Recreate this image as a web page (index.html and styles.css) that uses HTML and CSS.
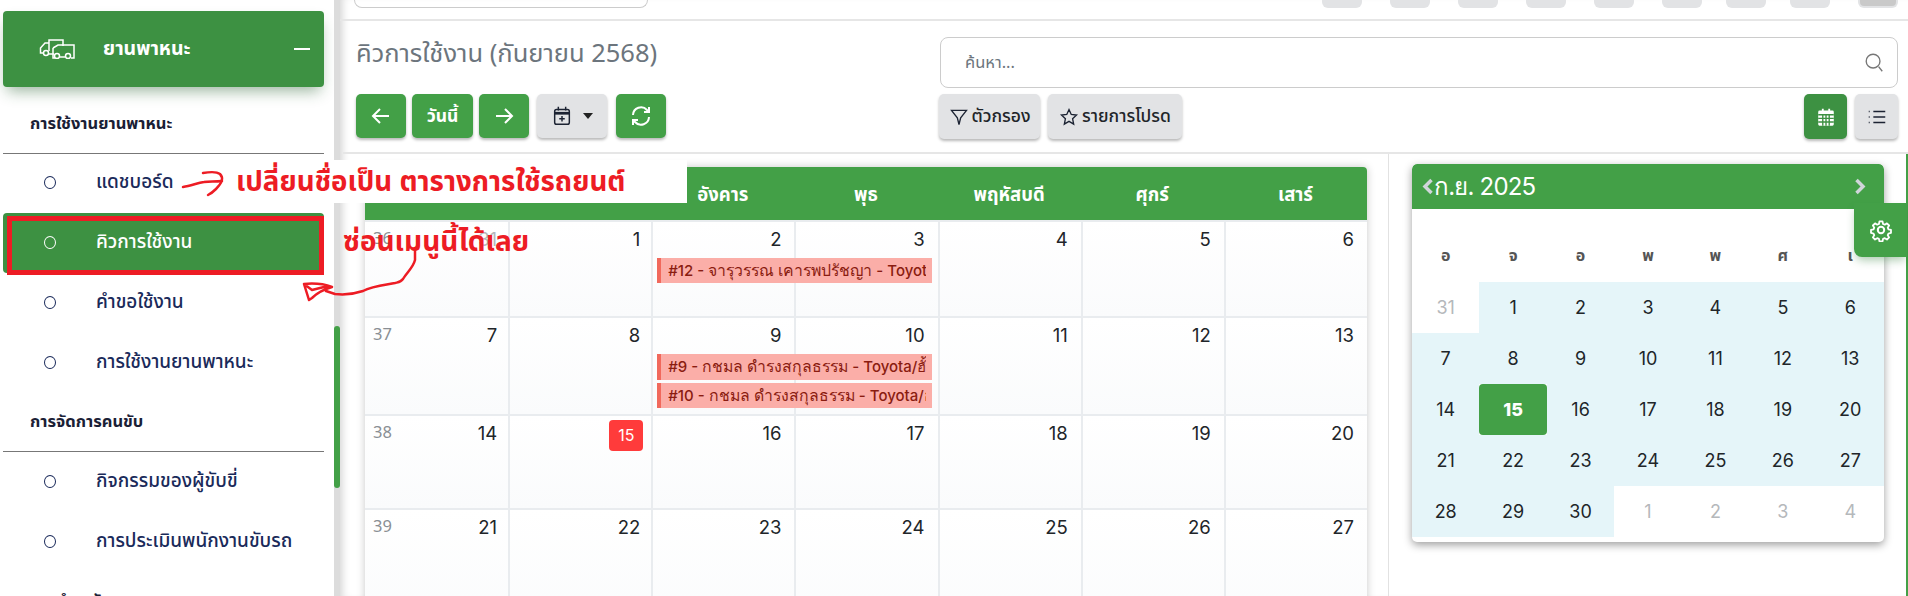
FILE: index.html
```html
<!DOCTYPE html>
<html lang="th">
<head>
<meta charset="utf-8">
<title>คิวการใช้งาน</title>
<link rel="stylesheet" href="styles.css">
</head>
<body>
<div class="app">
  <aside class="side">
    <div class="menu-head">
      <svg class="truck" viewBox="0 0 36 20" fill="none" stroke="#fff" stroke-width="1.5"><path d="M10 12V1h14v6"/><path d="M10 4H6L1.500 9v5h3"/><circle cx="7" cy="14" r="2.500"/><path d="M10 15h5"/><path d="M14 9l5-3h16v13h-3"/><path d="M14 9v10h2"/><circle cx="18" cy="17" r="2.500"/><circle cx="29" cy="17" r="2.500"/><path d="M21 18h5"/></svg>
      <span class="menu-title">ยานพาหนะ</span>
      <span class="minus"></span>
    </div>
    <div class="sec">การใช้งานยานพาหนะ</div>
    <a class="row first"><i class="dot"></i>แดชบอร์ด</a>
    <a class="row active"><i class="dot"></i>คิวการใช้งาน</a>
    <a class="row"><i class="dot"></i>คำขอใช้งาน</a>
    <a class="row"><i class="dot"></i>การใช้งานยานพาหนะ</a>
    <div class="sec sec2">การจัดการคนขับ</div>
    <a class="row"><i class="dot"></i>กิจกรรมของผู้ขับขี่</a>
    <a class="row"><i class="dot"></i>การประเมินพนักงานขับรถ</a>
    <div class="sec sec2">การบำรุงรักษา</div>
  </aside>
  <div class="track"><div class="thumb"></div></div>
  <main class="main">
    <div class="topbar">
      <div class="topsearch"></div>
      <div class="topbtns"><b></b><b></b><b></b><b></b><b></b><b></b><b></b><b></b><b class="avatar"></b></div>
    </div>
    <div class="toolbar">
      <div class="tool-left">
        <h1 class="title">คิวการใช้งาน (กันยายน 2568)</h1>
        <div class="btns">
          <button class="btn g w50"><svg viewBox="0 0 24 24" class="ic"><path d="M20 12H4M11 5l-7 7 7 7"/></svg></button>
          <button class="btn g today">วันนี้</button>
          <button class="btn g w50"><svg viewBox="0 0 24 24" class="ic"><path d="M4 12h16M13 5l7 7-7 7"/></svg></button>
          <button class="btn s addb"><svg viewBox="0 0 24 24" class="ic dark"><rect x="4" y="5" width="16" height="16" rx="2"/><path d="M4 9h16" stroke-width="3"/><path d="M8 2v4M16 2v4M12 12v6M9 15h6"/></svg><span class="caret"></span></button>
          <button class="btn g w50"><svg viewBox="0 0 24 24" class="ic"><path d="M4 11a8 8 0 0 1 14-5l2 2M20 3v5h-5M20 13a8 8 0 0 1-14 5l-2-2M4 21v-5h5"/></svg></button>
        </div>
      </div>
      <div class="tool-right">
        <div class="search"><span>ค้นหา...</span><svg viewBox="0 0 24 24" class="ic gray"><circle cx="11" cy="10" r="7.500"/><path d="M17 16l4 5"/></svg></div>
        <div class="filters">
          <button class="btn s fb fb1"><svg viewBox="0 0 24 24" class="ic dark"><path d="M3 4h18l-7 9v0l-2 8-2-8z"/></svg>ตัวกรอง</button>
          <button class="btn s fb fb2"><svg viewBox="0 0 24 24" class="ic dark"><path d="M12 3l2.700 6 6.300.7-4.700 4.300 1.300 6.500-5.600-3.300-5.600 3.300 1.300-6.500L3 9.700 9.300 9z"/></svg>รายการโปรด</button>
          <span class="grow"></span>
          <button class="btn view dg"><svg viewBox="0 0 24 24" class="cal-ic"><path fill="#fff" d="M5 5h2.500V3h2v2h5V3h2v2H19a1.500 1.500 0 0 1 1.500 1.500V20a1.500 1.500 0 0 1-1.500 1.500H5A1.500 1.500 0 0 1 3.500 20V6.500A1.500 1.500 0 0 1 5 5z"/><path stroke="#3d9142" stroke-width="1.500" d="M3.500 9.500h17M3.500 13.500h17M3.500 17.500h17M8.500 9.500v12M12 9.500v12M15.500 9.500v12"/></svg></button>
          <button class="btn view s"><svg viewBox="0 0 24 24" class="ic dark"><path d="M8 6h13M8 12h13M8 18h13M3 6h1M3 12h1M3 18h1"/></svg></button>
        </div>
      </div>
    </div>
    <div class="content">
      <section class="cal-wrap">
        <div class="cal">
          <div class="cal-head"><span>อาทิตย์</span><span>จันทร์</span><span>อังคาร</span><span>พุธ</span><span>พฤหัสบดี</span><span>ศุกร์</span><span>เสาร์</span></div>
          <div class="week wk1">
            <div class="day"><em>36</em><u class="other">31</u></div><div class="day"><u>1</u></div>
            <div class="day"><u>2</u><div class="evs"><div class="ev"><span>#12 - <small>จารุวรรณ เคารพปรัชญา</small> - Toyota/ฮั้ว 1234</span></div></div></div>
            <div class="day"><u>3</u></div><div class="day"><u>4</u></div><div class="day"><u>5</u></div><div class="day"><u>6</u></div>
          </div>
          <div class="week wk2">
            <div class="day"><em>37</em><u>7</u></div><div class="day"><u>8</u></div>
            <div class="day"><u>9</u><div class="evs"><div class="ev tall"><span>#9 - <small>กชมล ดำรงสกุลธรรม</small> - Toyota/ฮั้ว 1234</span></div><div class="ev"><span>#10 - <small>กชมล ดำรงสกุลธรรม</small> - Toyota/ฮั้ว 1234</span></div></div></div>
            <div class="day"><u>10</u></div><div class="day"><u>11</u></div><div class="day"><u>12</u></div><div class="day"><u>13</u></div>
          </div>
          <div class="week wk3">
            <div class="day"><em>38</em><u>14</u></div><div class="day"><u class="now">15</u></div><div class="day"><u>16</u></div><div class="day"><u>17</u></div><div class="day"><u>18</u></div><div class="day"><u>19</u></div><div class="day"><u>20</u></div>
          </div>
          <div class="week wk4">
            <div class="day"><em>39</em><u>21</u></div><div class="day"><u>22</u></div><div class="day"><u>23</u></div><div class="day"><u>24</u></div><div class="day"><u>25</u></div><div class="day"><u>26</u></div><div class="day"><u>27</u></div>
          </div>
        </div>
      </section>
      <section class="right">
        <div class="mini">
          <div class="mini-head">
            <svg class="chev" viewBox="0 0 12 17"><path d="M9.500 2L3 8.500 9.500 15"/></svg><span class="mini-title">ก.ย. 2025</span><svg class="chev" viewBox="0 0 12 17"><path d="M2.500 2L9 8.500 2.500 15"/></svg>
          </div>
          <div class="mini-dow"><span>อ</span><span>จ</span><span>อ</span><span>พ</span><span>พ</span><span>ศ</span><span>เ</span></div>
          <div class="mini-grid">
            <span class="off">31</span><span class="in">1</span><span class="in">2</span><span class="in">3</span><span class="in">4</span><span class="in">5</span><span class="in">6</span>
            <span class="in">7</span><span class="in">8</span><span class="in">9</span><span class="in">10</span><span class="in">11</span><span class="in">12</span><span class="in">13</span>
            <span class="in">14</span><span class="sel">15</span><span class="in">16</span><span class="in">17</span><span class="in">18</span><span class="in">19</span><span class="in">20</span>
            <span class="in">21</span><span class="in">22</span><span class="in">23</span><span class="in">24</span><span class="in">25</span><span class="in">26</span><span class="in">27</span>
            <span class="in">28</span><span class="in">29</span><span class="in">30</span><span class="off">1</span><span class="off">2</span><span class="off">3</span><span class="off">4</span>
          </div>
        </div>
      </section>
      <div class="edge"></div>
    </div>
  </main>
</div>
<button class="gear"><svg viewBox="0 0 24 24"><path d="M10.300 2.500h3.400l.6 2.800 1.900.8 2.400-1.500 2.400 2.400-1.500 2.400.8 1.900 2.800.6v3.400l-2.800.6-.8 1.900 1.500 2.400-2.400 2.400-2.400-1.500-1.900.8-.6 2.800h-3.400l-.6-2.800-1.900-.8-2.400 1.500-2.400-2.400 1.500-2.400-.8-1.900-2.800-.6v-3.400l2.800-.6.8-1.900-1.500-2.400 2.400-2.400 2.400 1.500 1.900-.8z" transform="translate(1.200 1.200) scale(.9)"/><circle cx="12" cy="12" r="3.200"/></svg></button>
<div class="note-box"></div>
<div class="note note1">เปลี่ยนชื่อเป็น ตารางการใช้รถยนต์</div>
<div class="note note2">ซ่อนเมนูนี้ได้เลย</div>
<div class="red-rect"></div>
<svg class="scribble" viewBox="0 0 1908 596" fill="none" stroke="#ed1c24" stroke-width="2.500" stroke-linecap="round" stroke-linejoin="round">
  <path d="M183 187c8-1 14-4 21-5 5-1 11 0 18-1"/>
  <path d="M203 173c6-1 13-2 17 1 4 4 1 10-4 15-3 3-6 5-8 6"/>
  <path d="M415 249v11c-2 8-8 12-12 19-2 3-4 3-8 4-11 2-23 3-32 8-9 3-20 4-28 3l-9-3"/>
  <path d="M304 284c10-1 20 0 28 3-7 2-14 5-20 11l-3 2-5-16 8 6 16-4"/>
</svg>
</body>
</html>
```
FILE: styles.css
```css
* { box-sizing: border-box; }
html, body { margin: 0; height: 596px; overflow: hidden; background: #fff; }
body { font-family: "Noto Sans", "Noto Sans Thai", Inter, sans-serif; color: #212529; position: relative; }
.app { display: flex; width: 1908px; height: 596px; }
.side { width: 334px; flex: none; padding: 11px 10px 0 3px; overflow: hidden; background: #fff; }
.menu-head { height: 76px; background: #3d9142; border-radius: 4px; display: flex; align-items: center; color: #fff; padding: 0 14px 0 36px; box-shadow: 0 8px 14px -4px rgba(30,90,40,.45); }
.truck { width: 36px; height: 20px; margin-right: 28px; }
.menu-title { font-weight: 700; font-size: 19.500px; flex: 1; }
.minus { width: 16px; height: 2px; background: #fff; }
.sec { height: 67px; padding: 21px 0 0 27px; font-size: 16.500px; font-weight: 700; color: #1a2035; border-bottom: 1px solid #777; line-height: 30px; white-space: nowrap; }
.sec2 { height: 59px; padding-top: 13px; }
.row { display: flex; align-items: center; height: 60px; padding: 0 0 2px 41px; font-size: 19px; color: #1a2a5a; font-weight: 500; white-space: nowrap; }
.row.first { height: 59px; }
.active { background: #3d9142; color: #fff; border-radius: 4px; }
.dot { width: 12px; height: 13px; border-radius: 50%; border: 1.500px solid currentColor; margin-right: 40px; flex: none; }
.track { width: 6px; flex: none; background: #dcdcdc; position: relative; }
.thumb { position: absolute; top: 326px; left: 0; width: 6px; height: 162px; background: #43a047; border-radius: 3px; }
.main { flex: 1; min-width: 0; display: flex; flex-direction: column; box-shadow: inset 8px 0 8px -6px rgba(0,0,0,.18); }
.topbar { height: 21px; flex: none; border-bottom: 2px solid #e6e6e6; display: flex; justify-content: space-between; align-items: flex-start; padding: 0 10px 0 14px; }
.topsearch { width: 294px; height: 8px; border: 1px solid #ccc; border-top: 0; border-radius: 0 0 8px 8px; }
.topbtns { display: flex; gap: 28px; }
.topbtns b { display: block; width: 40px; height: 8px; background: #e2e3e5; border-radius: 0 0 6px 6px; }
.topbtns b:nth-child(7), .topbtns b:nth-child(8) { margin-left: -4px; }
.topbtns .avatar { background: #c9c9c9; border: 2px solid #e2e3e5; border-top: 0; }
.toolbar { height: 133px; flex: none; display: flex; justify-content: space-between; border-bottom: 2px solid #e6e6e6; padding-left: 13px; margin-left: 3px; }
.title { margin: 0; font-size: 25.500px; font-weight: 400; color: #6c757d; height: 73px; line-height: 62px; white-space: nowrap; }
.btns { display: flex; gap: 6px; }
.btn { border: 0; height: 44px; border-radius: 5px; display: inline-flex; align-items: center; justify-content: center; font: 500 17.500px "Noto Sans", "Noto Sans Thai", sans-serif; padding: 0; box-shadow: 0 2px 3px rgba(0,0,0,.28); white-space: nowrap; }
.g { background: #43a047; color: #fff; }
.s { background: #e2e3e5; color: #212529; }
.dg { background: #3d9142; }
.w50 { width: 50px; }
.today { width: 61px; font-weight: 700; }
.addb { width: 70px; margin: 0 3px 0 2px; gap: 10px; }
.ic { width: 24px; height: 24px; fill: none; stroke: #fff; stroke-width: 2; }
.ic.dark { stroke: #1c2333; stroke-width: 1.600; width: 22px; height: 22px; }
.ic.gray { stroke: #777; stroke-width: 1.500; width: 22px; height: 22px; }
.caret { border: 5px solid transparent; border-top: 6px solid #222; border-bottom: 0; }
.tool-right { width: 969px; padding: 16px 10px 0 0; display: flex; flex-direction: column; gap: 6px; }
.search { height: 51px; margin-left: 1px; border: 1px solid #ccc; border-radius: 8px; display: flex; align-items: center; justify-content: space-between; padding: 0 12px 0 24px; font-size: 16.500px; color: #6c757d; }
.filters { display: flex; gap: 8px; }
.fb { height: 45px; gap: 3px; }
.fb .ic.dark { width: 20px; height: 20px; }
.fb1 { width: 101px; }
.fb2 { width: 134px; }
.grow { flex: 1; }
.view { width: 43px; height: 45px; }
.cal-ic { width: 22px; height: 22px; }
.content { flex: 1; min-height: 0; display: flex; position: relative; }
.cal-wrap { width: 1049px; flex: none; border-right: 1px solid #e2e2e2; padding: 13px 21px 0 25px; overflow: hidden; }
.cal { box-shadow: 0 0 8px rgba(0,0,0,.22); border-radius: 4px 4px 0 0; }
.cal-head { height: 53px; background: #43a047; display: grid; grid-template-columns: repeat(7, 1fr); align-items: center; text-align: center; color: #fff; font-weight: 700; font-size: 18.500px; padding-top: 2px; border-radius: 4px 4px 0 0; }
.week { display: grid; grid-template-columns: repeat(7, 1fr); border-top: 2px solid #e9ecef; background: linear-gradient(#fff, #fafbfc); }
.wk1 { height: 96px; }
.wk2 { height: 98px; }
.wk3 { height: 94px; }
.wk4 { height: 120px; }
.day { position: relative; border-left: 2px solid #e9ecef; padding: 4px 13px 0 8px; display: flex; justify-content: space-between; align-items: flex-start; }
.day:first-child { border-left: 0; }
.day:nth-child(-n+2) { padding-right: 11px; }
.day em { font-style: normal; font-size: 16.500px; color: #8a8f94; line-height: 24px; }
.day u { text-decoration: none; font-size: 18.500px; line-height: 26px; margin-left: auto; font-family: Inter, sans-serif; }
.day u.other { color: #b5b8bb; }
.day u.now { width: 34px; height: 31px; background: #ff3b3b; color: #fff; border-radius: 4px; font-size: 16px; line-height: 31px; text-align: center; margin: 0 -3px 0 auto; }
.evs { position: absolute; left: 4px; top: 36px; width: 275px; z-index: 1; display: flex; flex-direction: column; gap: 3px; }
.ev { height: 25px; background: #fbaea8; border-left: 4px solid #f1695c; padding: 0 6px 0 7px; font: 500 15px/25px Inter, "Noto Sans", sans-serif; color: #8a1c10; }
.ev span { display: block; overflow: hidden; white-space: nowrap; }
.ev small { font: 400 15.800px "Noto Sans", sans-serif; }
.ev.tall { height: 26px; }
.right { flex: 1; padding: 10px 0 0 23px; }
.mini { width: 472px; height: 378px; border-radius: 5px; background: #fff; box-shadow: 0 3px 8px rgba(0,0,0,.38); overflow: hidden; }
.mini-head { height: 45px; background: #43a047; color: #fff; display: flex; align-items: center; padding: 0 18px 0 10px; border-radius: 5px 5px 0 0; }
.mini-title { font-size: 24px; letter-spacing: -.8px; flex: 1; font-family: Inter, "Noto Sans", sans-serif; }
.chev { width: 12px; height: 17px; fill: none; stroke: #d0d5da; stroke-width: 3.500; flex: none; }
.mini-dow { display: grid; grid-template-columns: repeat(7, 1fr); height: 73px; align-items: center; text-align: center; font-weight: 700; font-size: 16px; color: #555; padding-top: 20px; }
.mini-grid { display: grid; grid-template-columns: repeat(7, 1fr); grid-auto-rows: 51px; font: 400 18px Inter, sans-serif; }
.mini-grid span { display: flex; align-items: center; justify-content: center; }
.in { background: #e5f5f9; }
.off { color: #b5b8bb; }
.sel { background: #43a047; color: #fff; font-weight: 800; border-radius: 4px; }
.edge { width: 2px; flex: none; background: #43a047; }
.gear { position: absolute; left: 1854px; top: 203px; width: 53px; height: 54px; border: 0; padding: 0; background: #43a047; border-radius: 0 0 0 8px; box-shadow: 0 5px 10px -2px rgba(40,120,50,.4); display: flex; align-items: center; justify-content: center; }
.gear svg { width: 24px; height: 24px; fill: none; stroke: #fff; stroke-width: 2; stroke-linejoin: round; }
.note-box { position: absolute; left: 180px; top: 160px; width: 507px; height: 43px; background: #fff; }
.note { position: absolute; color: #ed1c24; font-weight: 700; white-space: nowrap; }
.note1 { left: 236px; top: 159px; font-size: 27.700px; line-height: 42px; }
.note2 { left: 343px; top: 220px; font-size: 28px; line-height: 40px; }
.red-rect { position: absolute; left: 7px; top: 216px; width: 317px; height: 59px; border: 5px solid #ed1c24; }
.scribble { position: absolute; left: 0; top: 0; width: 1908px; height: 596px; pointer-events: none; }
```
